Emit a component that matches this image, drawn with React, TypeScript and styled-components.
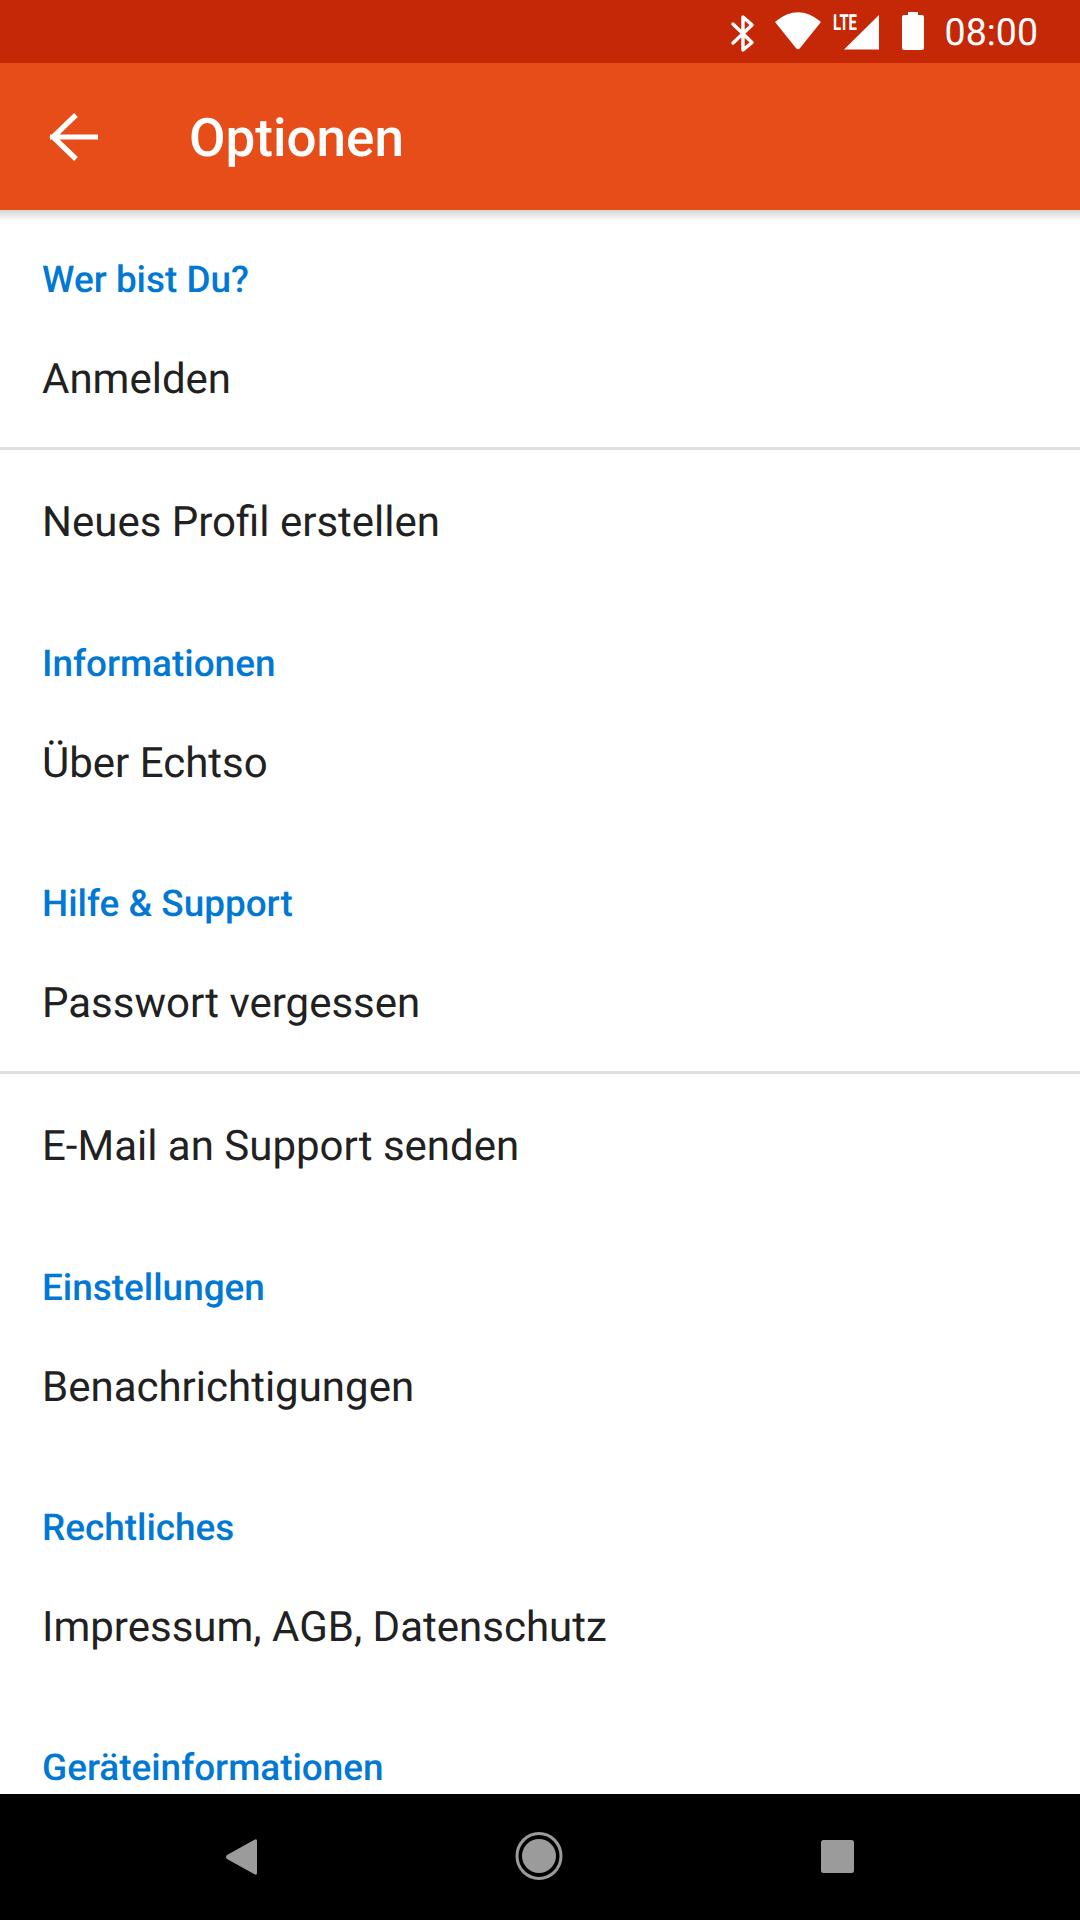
import React from "react";
import styled, { createGlobalStyle } from "styled-components";

const Global = createGlobalStyle`
  html, body { margin: 0; padding: 0; background: #fff; }
  body {
    font-family: Roboto, "Noto Sans", sans-serif;
    text-rendering: geometricPrecision;
  }
`;

const Phone = styled.div`
  width: 1080px;
  height: 1920px;
  display: flex;
  flex-direction: column;
  overflow: hidden;
  background: #fff;
`;

const StatusBar = styled.div`
  height: 63px;
  flex: none;
  background: #c52806;
  color: #fff;
  display: flex;
  align-items: center;
  justify-content: flex-end;
  padding-right: 42px;
`;

const StatusIcons = styled.svg`
  display: block;
  width: 190px;
  height: 63px;
  flex: none;
`;

const BatteryShape = styled.svg`
  display: block;
  width: 22px;
  height: 38px;
  margin: 0 21px 1px 0;
  flex: none;
`;

const Clock = styled.span`
  font-size: 37.5px;
  line-height: 59px;
  padding-top: 4px;
  font-weight: 400;
`;

const Toolbar = styled.header`
  height: 147px;
  flex: none;
  background: #e64d19;
  color: #fff;
  display: flex;
  align-items: center;
  padding-left: 48px;
  position: relative;
  z-index: 1;

  &::after {
    content: "";
    position: absolute;
    left: 0;
    right: 0;
    top: 100%;
    height: 11px;
    background: linear-gradient(rgba(0, 0, 0, 0.17), rgba(0, 0, 0, 0));
  }
`;

const BackIcon = styled.svg`
  display: block;
  width: 50px;
  height: 50px;
  flex: none;
  margin-right: 91px;
`;

const Title = styled.h1`
  margin: 0;
  padding-top: 2px;
  font-size: 53px;
  font-weight: 500;
  line-height: 60px;
`;

const Content = styled.main`
  flex: 1;
  min-height: 0;
  overflow: hidden;
  display: flex;
  flex-direction: column;
`;

const SectionTitle = styled.h2`
  margin: 0;
  padding: 50px 42px 7px;
  font-size: 36.9px;
  line-height: 42px;
  font-weight: 500;
  color: #0078d4;
  flex: none;
`;

const Row = styled.div<{ $beforeDivider?: boolean; $afterDivider?: boolean }>`
  padding: ${(p) => (p.$afterDivider ? 49 : 47)}px 42px ${(p) => (p.$beforeDivider ? 43 : p.$afterDivider ? 47 : 46)}px;
  flex: none;
  font-size: 42px;
  color: #212121;
  line-height: 48px;
`;

const Divider = styled.div`
  height: 3px;
  flex: none;
  background: #e0e0e0;
`;

const NavBar = styled.nav`
  height: 126px;
  flex: none;
  background: #000;
`;

const NavIcons = styled.svg`
  display: block;
  width: 1080px;
  height: 126px;
`;

export default function App() {
  return (
    <Phone>
      <Global />
      <StatusBar>
        <StatusIcons viewBox="0 0 190 63">
          <path d="M21 24 L40 42.5 L31 50 L31 17 L40 25 L21 43" fill="none" stroke="#fff" strokeWidth="3.4" strokeLinecap="round" strokeLinejoin="round" />
          <path d="M64 22 Q86 4 108 22 L87.5 47.5 Q86 49.5 84.5 47.5 Z" fill="#fff" stroke="#fff" strokeWidth="1.5" strokeLinejoin="round" />
          <path d="M132 49.5 L167 15 L167 49.5 Z" fill="#fff" />
          <text x="121" y="30" fill="#fff" fontFamily="Roboto" fontWeight="700" fontSize="22" textLength="24" lengthAdjust="spacingAndGlyphs">LTE</text>
        </StatusIcons>
        <BatteryShape viewBox="0 0 22 38">
          <path d="M6 0 H16 V3 H20 Q22 3 22 5 V36 Q22 38 20 38 H2 Q0 38 0 36 V5 Q0 3 2 3 H6 Z" fill="#fff" />
        </BatteryShape>
        <Clock>08:00</Clock>
      </StatusBar>
      <Toolbar>
        <BackIcon viewBox="0 0 50 50">
          <path d="M2 25 L50 25 M28 3 L5 25 L28 47" fill="none" stroke="#fff" strokeWidth="5.2" />
        </BackIcon>
        <Title>Optionen</Title>
      </Toolbar>
      <Content>
        <SectionTitle>Wer bist Du?</SectionTitle>
        <Row $beforeDivider>Anmelden</Row>
        <Divider />
        <Row $afterDivider>Neues Profil erstellen</Row>
        <SectionTitle>Informationen</SectionTitle>
        <Row>Über Echtso</Row>
        <SectionTitle>Hilfe &amp; Support</SectionTitle>
        <Row $beforeDivider>Passwort vergessen</Row>
        <Divider />
        <Row $afterDivider>E-Mail an Support senden</Row>
        <SectionTitle>Einstellungen</SectionTitle>
        <Row>Benachrichtigungen</Row>
        <SectionTitle>Rechtliches</SectionTitle>
        <Row>Impressum, AGB, Datenschutz</Row>
        <SectionTitle>Geräteinformationen</SectionTitle>
      </Content>
      <NavBar>
        <NavIcons viewBox="0 0 1080 126">
          <path d="M257 47 Q257 44 254 46 L227 61 Q225 63 227 65 L254 80 Q257 82 257 79 Z" fill="#9b9b9b" />
          <ellipse cx="539" cy="62" rx="22" ry="22.5" fill="none" stroke="#9b9b9b" strokeWidth="3" />
          <circle cx="539" cy="62" r="17" fill="#9b9b9b" />
          <rect x="821" y="46" width="33" height="33" rx="2.5" fill="#9b9b9b" />
        </NavIcons>
      </NavBar>
    </Phone>
  );
}
